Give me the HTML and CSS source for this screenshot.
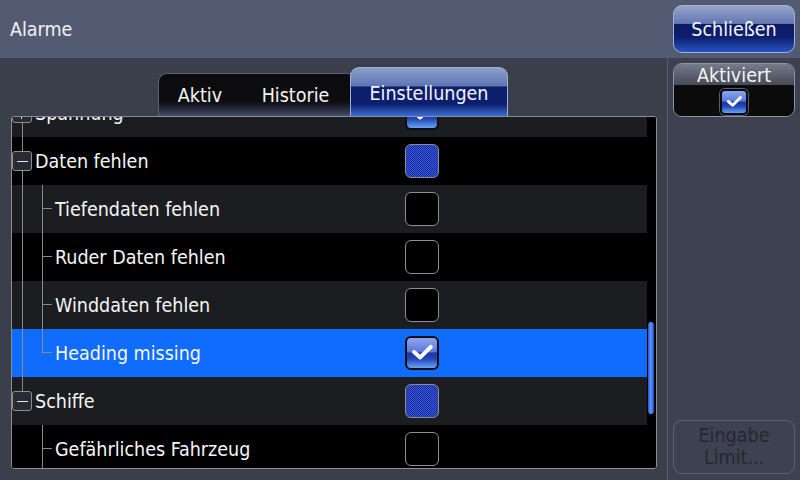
FILE: index.html
```html
<!DOCTYPE html>
<html lang="de">
<head>
<meta charset="utf-8">
<title>Alarme</title>
<link rel="stylesheet" href="styles.css">
</head>
<body>
<div class="screen">
  <header class="topbar">
    <div class="title">Alarme</div>
    <button class="btn-glossy btn-close">Schließen</button>
  </header>
  <div class="main">
    <section class="content">
      <nav class="tabs">
        <div class="tab-group">
          <div class="tab tab-aktiv">Aktiv</div>
          <div class="tab tab-hist">Historie</div>
        </div>
        <div class="tab tab-active">Einstellungen</div>
      </nav>
      <div class="panel">
        <div class="list-view">
          <div class="list">
            <div class="row grey">
              <span class="ind line-full"><span class="exp plus"></span></span>
              <span class="label">Spannung</span>
              <span class="cb cb-checked"><svg viewBox="0 0 34 34"><polyline points="8,16 15,22 27,10"/></svg></span>
            </div>
            <div class="row black">
              <span class="ind line-full"><span class="exp"></span></span>
              <span class="label">Daten fehlen</span>
              <span class="cb cb-mixed"></span>
            </div>
            <div class="row grey">
              <span class="ind line-full"></span>
              <span class="ind line-full tick"></span>
              <span class="label">Tiefendaten fehlen</span>
              <span class="cb"></span>
            </div>
            <div class="row black">
              <span class="ind line-full"></span>
              <span class="ind line-full tick"></span>
              <span class="label">Ruder Daten fehlen</span>
              <span class="cb"></span>
            </div>
            <div class="row grey">
              <span class="ind line-full"></span>
              <span class="ind line-full tick"></span>
              <span class="label">Winddaten fehlen</span>
              <span class="cb"></span>
            </div>
            <div class="row selected">
              <span class="ind line-full"></span>
              <span class="ind line-top tick"></span>
              <span class="label">Heading missing</span>
              <span class="cb cb-checked"><svg viewBox="0 0 34 34"><polyline points="8,16 15,22 27,10"/></svg></span>
            </div>
            <div class="row grey">
              <span class="ind line-top"><span class="exp"></span></span>
              <span class="label">Schiffe</span>
              <span class="cb cb-mixed"></span>
            </div>
            <div class="row black">
              <span class="ind"></span>
              <span class="ind line-full tick"></span>
              <span class="label">Gefährliches Fahrzeug</span>
              <span class="cb"></span>
            </div>
          </div>
        </div>
        <div class="scroll-track"><div class="scroll-thumb"></div></div>
      </div>
    </section>
    <aside class="side">
      <div class="toggle-btn">
        <div class="toggle-label">Aktiviert</div>
        <div class="toggle-body">
          <span class="cb cb-checked cb-small"><svg viewBox="0 0 34 34"><polyline points="8,16 15,22 27,10"/></svg></span>
        </div>
      </div>
      <div class="btn-disabled">Eingabe<br>Limit...</div>
    </aside>
  </div>
</div>
</body>
</html>
```

FILE: styles.css
```css
* { box-sizing: border-box; }

html, body {
  margin: 0;
  padding: 0;
  width: 800px;
  height: 480px;
  overflow: hidden;
  background: #3b3e4b;
  font-family: "DejaVu Sans Condensed", "DejaVu Sans", sans-serif;
  font-stretch: condensed;
  font-size: 19.5px;
  color: #f4f4f4;
}

.screen {
  width: 800px;
  height: 480px;
  display: flex;
  flex-direction: column;
}

/* ---------- top bar ---------- */
.topbar {
  height: 58px;
  flex: 0 0 58px;
  background: #525b72;
  display: flex;
  align-items: center;
  justify-content: space-between;
  padding: 0 5px 0 10px;
}

.title {
  color: #f2f2f2;
}

button {
  font-family: inherit;
  font-stretch: condensed;
  font-size: 19.5px;
  margin: 0;
  cursor: default;
}

.btn-glossy {
  width: 122px;
  height: 48px;
  border: 1px solid #a3b1d8;
  border-radius: 9px;
  color: #f4f4f8;
  background: linear-gradient(to bottom,
    #95a5cf 0%, #6477b0 38%,
    #0c1b62 39%, #0d1f6c 68%,
    #2654c2 100%);
  padding: 0;
}

/* ---------- main ---------- */
.main {
  flex: 1;
  display: flex;
}

.content {
  width: 667px;
  display: flex;
  flex-direction: column;
}

.tabs {
  height: 58px;
  display: flex;
  align-items: flex-end;
  padding-left: 158px;
}

.tab {
  display: flex;
  align-items: center;
  justify-content: center;
  color: #f4f4f4;
}

.tab-group {
  display: flex;
  height: 43px;
  border: 1px solid #5d6070;
  border-bottom: none;
  border-right: none;
  border-radius: 9px 0 0 0;
  background: linear-gradient(to bottom, #0b0b0d 0%, #0d0d10 66%, #2c3146 88%, #465072 100%);
}

.tab-aktiv { width: 82px; padding-top: 1px; }
.tab-hist { width: 109px; padding-top: 1px; }

.tab-active {
  width: 158px;
  height: 49px;
  border: 1px solid #a0aed4;
  border-bottom: none;
  border-radius: 9px 9px 0 0;
  background: linear-gradient(to bottom,
    #8c9fcc 0%, #5c74b2 38%,
    #0c1e6b 39%, #0c1f6e 75%,
    #3a6cd2 100%);
  padding-top: 2px;
}

.panel {
  margin: 0 10px 11px 11px;
  height: 353px;
  border: 1px solid #8a8d96;
  border-radius: 3px;
  display: flex;
  background: #000;
  overflow: hidden;
}

.list-view {
  width: 635px;
  overflow: hidden;
}

.list {
  margin-top: -28px;
}

.row {
  height: 48px;
  display: flex;
  align-items: stretch;
}

.row.grey { background: #1c1d21; }
.row.black { background: #000; }
.row.selected { background: #0f6cff; }

.ind {
  width: 20px;
  flex: 0 0 20px;
  display: flex;
  align-items: center;
  justify-content: flex-start;
  background-repeat: no-repeat;
}

.ind.line-full {
  background-image: linear-gradient(#8a8a8a, #8a8a8a);
  background-position: 10px 0;
  background-size: 1px 100%;
}

.ind.line-top {
  background-image: linear-gradient(#8a8a8a, #8a8a8a);
  background-position: 10px 0;
  background-size: 1px 50%;
}

.ind.line-full.tick {
  background-image: linear-gradient(#8a8a8a, #8a8a8a), linear-gradient(#8a8a8a, #8a8a8a);
  background-position: 10px 0, 10px 23px;
  background-size: 1px 100%, 10px 1px;
}

.ind.line-top.tick {
  background-image: linear-gradient(#8a8a8a, #8a8a8a), linear-gradient(#8a8a8a, #8a8a8a);
  background-position: 10px 0, 10px 23px;
  background-size: 1px 24px, 10px 1px;
}

.exp {
  width: 20px;
  height: 20px;
  border: 1px solid #8c8e96;
  border-radius: 3px;
  background: #2a2b32;
  display: flex;
  align-items: center;
  justify-content: center;
  position: relative;
}

.exp::before {
  content: "";
  width: 11px;
  height: 1px;
  background: #e6e6e6;
}

.exp.plus::after {
  content: "";
  position: absolute;
  left: 8px;
  top: 3px;
  width: 1px;
  height: 12px;
  background: #e6e6e6;
}

.label {
  flex: 1;
  align-self: center;
  margin-left: 3px;
  white-space: nowrap;
  color: #f6f6f6;
}

/* ---------- checkboxes ---------- */
.cb {
  width: 34px;
  height: 34px;
  flex: 0 0 34px;
  align-self: center;
  margin-right: 208px;
  border: 1px solid #8e8e92;
  border-radius: 6px;
  background: #000;
  display: flex;
  align-items: center;
  justify-content: center;
}

.cb-mixed {
  background-color: #1a2c98;
  background-image: repeating-conic-gradient(#17278c 0 25%, #3b5ce8 0 50%);
  background-size: 2px 2px;
  border-color: #8a8c96;
}

.cb-checked {
  border: 2px solid #0b0c14;
  background: linear-gradient(to bottom,
    #8ea6ee 0%, #5a78dc 46%,
    #1b37a4 50%, #2348b8 70%,
    #6aa2f2 100%);
}

.cb svg {
  width: 100%;
  height: 100%;
  display: block;
}

.cb svg polyline {
  fill: none;
  stroke: #ffffff;
  stroke-width: 4.5;
  stroke-linecap: round;
  stroke-linejoin: round;
}

.cb-small {
  width: 28px;
  height: 26px;
  flex: 0 0 28px;
  margin: 0 0 1px 0;
  border-radius: 5px;
  align-self: flex-end;
  box-shadow: 0 0 0 1px #5a5e6a;
}

/* ---------- scrollbar ---------- */
.scroll-track {
  width: 9px;
  flex: 0 0 9px;
  background: #000;
  padding: 205px 2px 0 1px;
}

.scroll-thumb {
  width: 6px;
  height: 92px;
  border-radius: 3px;
  background: linear-gradient(to right, #1e52d0 0%, #5f95f4 45%, #3f78ea 70%, #1a4cc8 100%);
}

/* ---------- side column ---------- */
.side {
  flex: 1;
  border-left: 1px solid #585c6a;
  background: #3e4150;
  display: flex;
  flex-direction: column;
  justify-content: space-between;
  padding: 5px 5px 6px 5px;
}

.toggle-btn {
  width: 122px;
  height: 54px;
  border: 1px solid #8e93a2;
  border-radius: 9px;
  overflow: hidden;
  display: flex;
  flex-direction: column;
}

.toggle-label {
  height: 21px;
  flex: 0 0 21px;
  background: linear-gradient(to bottom, #777c8b 0%, #575c6a 60%, #474b58 100%);
  text-align: center;
  line-height: 24px;
  color: #f4f4f4;
}

.toggle-body {
  flex: 1;
  background: #0b0b0c;
  display: flex;
  justify-content: center;
  align-items: flex-end;
}

.btn-disabled {
  width: 122px;
  height: 54px;
  border: 1px solid #5d6170;
  border-radius: 9px;
  color: #252833;
  line-height: 22px;
  display: flex;
  align-items: center;
  justify-content: center;
  text-align: center;
}
```
